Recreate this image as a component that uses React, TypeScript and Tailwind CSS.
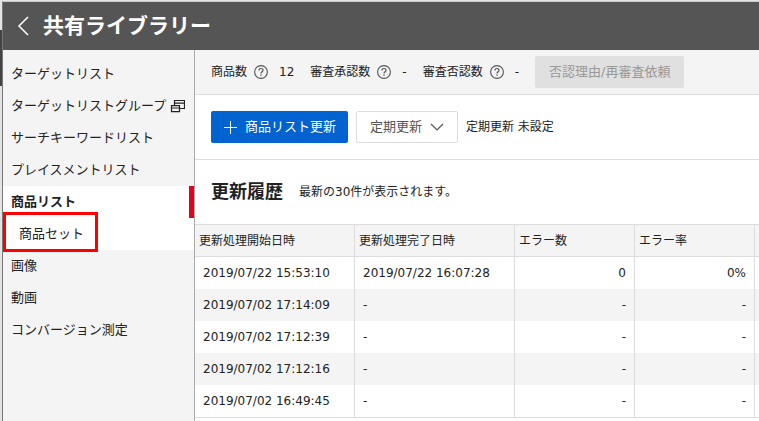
import * as React from "react"
import { clsx } from "clsx"

interface NavItem {
    label: string
    active?: boolean
    child?: boolean
    popup?: boolean
}

const navItems: NavItem[] = [
    { label: "ターゲットリスト" },
    { label: "ターゲットリストグループ", popup: true },
    { label: "サーチキーワードリスト" },
    { label: "プレイスメントリスト" },
    { label: "商品リスト", active: true },
    { label: "商品セット", child: true },
    { label: "画像" },
    { label: "動画" },
    { label: "コンバージョン測定" },
]

const history = [
    { start: "2019/07/22 15:53:10", end: "2019/07/22 16:07:28", errors: "0", rate: "0%" },
    { start: "2019/07/02 17:14:09", end: "-", errors: "-", rate: "-" },
    { start: "2019/07/02 17:12:39", end: "-", errors: "-", rate: "-" },
    { start: "2019/07/02 17:12:16", end: "-", errors: "-", rate: "-" },
    { start: "2019/07/02 16:49:45", end: "-", errors: "-", rate: "-" },
]

function HelpIcon() {
    return (
        <svg width="14" height="14" viewBox="0 0 14 14" fill="none" stroke="#555" aria-hidden="true">
            <circle cx="7" cy="7" r="6.4" strokeWidth="1.1" />
            <path d="M5 5.5C5 4.2 5.9 3.5 7 3.5s2 .7 2 1.8c0 1.4-2 1.5-2 3.2" strokeWidth="1.2" />
            <path d="M7 9.6v1.2" strokeWidth="1.3" />
        </svg>
    )
}

function PopupIcon() {
    return (
        <svg className="shrink-0" width="15" height="13" viewBox="0 0 15 13" fill="none" stroke="#222" strokeWidth="1.2" aria-hidden="true">
            <path d="M4.5 5.5v-5h10v8h-5M4.5 3.2h10" />
            <path d="M1.5 5.7h8v6h-8zM1.5 8h8" />
        </svg>
    )
}

function Stat({ label, value }: { label: string; value: string }) {
    return (
        <div className="flex items-center whitespace-nowrap">
            <span>{label}</span>
            <button type="button" className="mx-[7px] flex" aria-label={`${label}の説明`}>
                <HelpIcon />
            </button>
            <span className="ml-1">{value}</span>
        </div>
    )
}

/* ── Sidebar ── */
function Sidebar() {
    return (
        <nav className="w-48 shrink-0 border-r border-[#aaa] bg-[#f4f4f4] pt-2 text-[13px]">
            <ul>
                {navItems.map(item => (
                    <li
                        key={item.label}
                        className={clsx(
                            "relative h-8",
                            (item.active || item.child) && "bg-white",
                            item.active && "border-r-[5px] border-[#e6001f] font-bold",
                        )}
                    >
                        <a
                            href="#"
                            className={clsx("flex h-full items-center gap-1 whitespace-nowrap", item.child ? "pl-4" : "pl-2")}
                        >
                            {item.label}
                            {item.popup && <PopupIcon />}
                        </a>
                        {item.child && (
                            <span className="pointer-events-none absolute -top-[6px] left-0 h-10 w-[95px] border-3 border-[#f00]" />
                        )}
                    </li>
                ))}
            </ul>
        </nav>
    )
}

/* ── Update history ── */
function HistoryTable() {
    const head = "h-[33px] border-y border-r border-[#ddd] bg-[#f4f4f4] px-1 text-left font-normal"
    const cell = "h-8 border-r border-[#ddd] px-2"

    return (
        <table className="w-full table-fixed border-separate border-spacing-0 border-b border-[#ddd] whitespace-nowrap">
            <colgroup>
                <col className="w-40" />
                <col className="w-40" />
                <col className="w-[120px]" />
                <col className="w-[120px]" />
                <col />
            </colgroup>
            <thead>
                <tr>
                    <th className={head}>更新処理開始日時</th>
                    <th className={head}>更新処理完了日時</th>
                    <th className={head}>エラー数</th>
                    <th className={head}>エラー率</th>
                    <td className="border-y border-[#ddd] bg-[#f4f4f4]" />
                </tr>
            </thead>
            <tbody>
                {history.map(row => (
                    <tr key={row.start} className="even:bg-[#f4f4f4]">
                        <td className={cell}>{row.start}</td>
                        <td className={cell}>{row.end}</td>
                        <td className={clsx(cell, "text-right")}>{row.errors}</td>
                        <td className={clsx(cell, "text-right")}>{row.rate}</td>
                        <td />
                    </tr>
                ))}
            </tbody>
        </table>
    )
}

export default function App() {
    return (
        <div className="flex min-h-screen bg-[#e4e4e4] font-['DejaVu_Sans','Noto_Sans_CJK_JP',sans-serif] text-xs text-[#222]">
            {/* Page behind the panel */}
            <div className="w-[2px] shrink-0 pt-[30px]">
                <div className="h-14 bg-[#444]" />
            </div>

            <div className="mt-px flex min-w-0 flex-1 flex-col border-t border-l border-[#777] border-t-[#ccc] bg-white">
                <header className="flex h-12 shrink-0 items-center bg-[#555] text-white">
                    <button type="button" className="ml-[14px] flex" aria-label="戻る">
                        <svg width="12" height="20" viewBox="0 0 12 20" fill="none" stroke="currentColor" strokeWidth="1.5">
                            <path d="M11 1 2 10l9 9" />
                        </svg>
                    </button>
                    <h1 className="ml-[14px] text-[21px] font-bold">共有ライブラリー</h1>
                </header>

                <div className="flex flex-1">
                    <Sidebar />

                    <main className="min-w-0 flex-1">
                        <div className="flex h-[45px] items-center gap-4 border-b border-[#ddd] bg-[#f4f4f4] pl-4">
                            <Stat label="商品数" value="12" />
                            <Stat label="審査承認数" value="-" />
                            <Stat label="審査否認数" value="-" />
                            <button
                                type="button"
                                disabled
                                className="h-8 rounded-xs bg-[#e0e0e0] px-[14px] text-[13px] whitespace-nowrap text-[#999]"
                            >
                                否認理由/再審査依頼
                            </button>
                        </div>

                        <div className="flex h-[65px] items-center gap-2 border-b border-[#ddd] pl-4 whitespace-nowrap">
                            <button
                                type="button"
                                className="flex h-8 items-center gap-2 rounded-xs bg-[#0063cf] px-3 text-[13px] text-white"
                            >
                                <svg width="14" height="14" viewBox="0 0 14 14" stroke="currentColor" aria-hidden="true">
                                    <path d="M7.5 1v13M1 7.5h13" />
                                </svg>
                                商品リスト更新
                            </button>
                            <button
                                type="button"
                                className="flex h-8 items-center gap-2 rounded-xs border border-[#ddd] px-[13px] text-[13px] text-[#555]"
                            >
                                定期更新
                                <svg width="14" height="8" viewBox="0 0 14 8" fill="none" stroke="currentColor" strokeWidth="1.2" aria-hidden="true">
                                    <path d="m1 1 6 6 6-6" />
                                </svg>
                            </button>
                            <span>定期更新 未設定</span>
                        </div>

                        <div className="flex h-16 items-center gap-4 pl-4">
                            <h2 className="text-lg font-bold">更新履歴</h2>
                            <p>最新の30件が表示されます。</p>
                        </div>

                        <HistoryTable />
                    </main>
                </div>
            </div>
        </div>
    )
}
